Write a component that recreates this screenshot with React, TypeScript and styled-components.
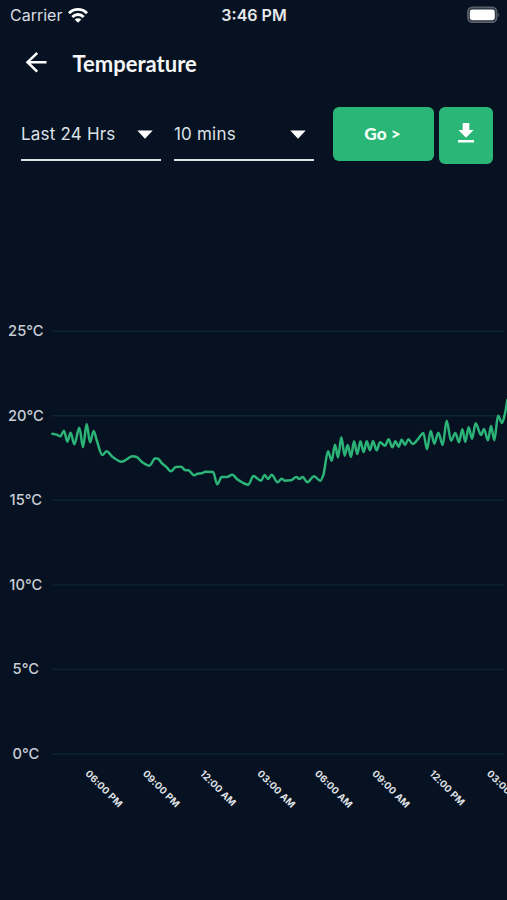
import React from "react";
import styled, { createGlobalStyle } from "styled-components";

const GlobalStyle = createGlobalStyle`
  * { box-sizing: border-box; }
  body { margin: 0; background: #061221; }
`;

const Screen = styled.main`
  width: 507px;
  height: 900px;
  overflow: hidden;
  display: flex;
  flex-direction: column;
  background: #061221;
  color: #f2f4f6;
  font-family: Inter, "Liberation Sans", sans-serif;
`;

const StatusBar = styled.div`
  height: 30px;
  padding: 0 6px 0 10px;
  display: grid;
  grid-template-columns: 1fr auto 1fr;
  align-items: center;
  font-size: 16px;
`;

const Carrier = styled.div`
  display: flex;
  align-items: center;
  gap: 6px;
  color: #d9dde2;
`;

const Clock = styled.div`
  margin-right: 3px;
  font-weight: 600;
  font-size: 16px;
  color: #e6e9ec;
`;

const BatterySlot = styled.div`
  display: flex;
  justify-content: flex-end;
`;

const Header = styled.header`
  height: 68px;
  padding: 0 0 0 24px;
  display: flex;
  align-items: center;
  gap: 24.5px;
`;

const Title = styled.h1`
  margin: 0;
  font: 700 22px/28px Lato, sans-serif;
  color: #f4f6f8;
`;

const Controls = styled.div`
  height: 70px;
  padding: 9px 13px 0 21px;
  display: flex;
  align-items: flex-start;
`;

const Select = styled.div`
  width: 140px;
  height: 54px;
  margin-right: 13px;
  padding: 2px 8px 0 0;
  display: flex;
  align-items: center;
  justify-content: space-between;
  border-bottom: 2px solid #dde0e3;
  font-size: 17px;
  letter-spacing: 0.2px;
  color: #dde1e7;
`;

const IconButton = styled.button<{ $width: number; $height: number }>`
  width: ${(p) => p.$width}px;
  height: ${(p) => p.$height}px;
  padding: 0 2px 0 0;
  border: 0;
  border-radius: 6px;
  display: flex;
  align-items: center;
  justify-content: center;
  background: #2ab676;
  color: #f4fff9;
  font: 900 17.2px/22px Lato, sans-serif;
`;

const DownloadButton = styled(IconButton)`
  padding: 0 0 5px;
`;

const Actions = styled.div`
  display: flex;
  align-items: flex-start;
  gap: 5px;
  margin-left: 6px;
`;

const Chart = styled.svg`
  display: block;
  flex: none;
`;

const AxisLabel = styled.text`
  fill: #c9ced6;
  font: 500 14.7px Inter, sans-serif;
`;

const TimeLabel = styled.text`
  fill: #e0e3e8;
  font: 700 9.6px Inter, sans-serif;
  letter-spacing: 0.15px;
`;

type Point = [number, number];

/* Readings in chart units, three units to a pixel, grouped by stretch of the day. */
const stretches: { from: number; points: Point[] }[] = [
  {
    from: 40,
    points: [[37,131],[50,134],[61,139],[72,122],[82,155],[92,128],[103,163],[118,113],[129,171],[140,102],[150,157],[161,123],[170,150],[187,195],[200,184],[218,201],[245,215],[278,199],[290,201],[305,215],[328,227],[346,205],[355,207],[365,219],[378,230],[393,244],[407,231]],
  },
  {
    from: 180,
    points: [[2,230],[8,233],[14,240],[25,241],[42,256],[53,251],[65,250],[76,245],[99,246],[112,283],[125,261],[140,261],[157,254],[172,268],[205,284],[220,258],[243,272],[254,255],[264,267],[275,254],[293,277],[305,266],[314,272],[333,271],[349,261],[358,267],[368,261],[382,277]],
  },
  {
    from: 310,
    points: [[12,259],[31,272],[40,255],[54,184],[65,212],[75,164],[84,202],[94,142],[104,197],[113,165],[123,201],[132,154],[142,192],[151,154],[161,186],[170,154],[180,181],[189,154],[200,181],[210,157],[225,167],[236,148],[247,172],[256,154],[266,170]],
  },
  {
    from: 400,
    points: [[5,149],[15,165],[25,148],[38,162],[55,146],[70,129],[81,178],[92,123],[103,161],[115,128],[128,165],[140,92],[153,152],[166,129],[177,157],[187,118],[196,156],[206,112],[216,146],[227,100],[243,135],[252,117],[264,151],[273,108],[283,151],[294,77],[306,99],[314,75],[322,30]],
  },
];

const CHART_TOP = 168;
const readings: Point[] = stretches.flatMap(({ from, points }) =>
  points.map(([x, y]): Point => [from + x / 3, 390 - CHART_TOP + y / 3])
);

/* Cubic path that never overshoots its readings. */
function monotonePath(p: Point[]): string {
  const slope = p.slice(1).map((q, i) => (q[1] - p[i][1]) / (q[0] - p[i][0]));
  const tangent = p.map((_, i) => {
    if (i === 0) return slope[0];
    if (i === p.length - 1) return slope[i - 1];
    const a = slope[i - 1];
    const b = slope[i];
    return a * b <= 0 ? 0 : (2 * a * b) / (a + b);
  });
  let d = `M${p[0][0]},${p[0][1]}`;
  for (let i = 1; i < p.length; i++) {
    const h = (p[i][0] - p[i - 1][0]) / 3;
    d += `C${p[i - 1][0] + h},${p[i - 1][1] + tangent[i - 1] * h} ${p[i][0] - h},${p[i][1] - tangent[i] * h} ${p[i][0]},${p[i][1]}`;
  }
  return d;
}

const degrees = [25, 20, 15, 10, 5, 0];
const times = ["06:00 PM", "09:00 PM", "12:00 AM", "03:00 AM", "06:00 AM", "09:00 AM", "12:00 PM", "03:00 PM"];

const Caret = () => (
  <svg width="16" height="9" viewBox="0 0 16 9">
    <path d="M0.3 0.5H15.7L8 8.7Z" fill="#fff" />
  </svg>
);

const Wifi = () => (
  <svg width="20" height="15" viewBox="0 0 20 15" fill="none" stroke="#fff" strokeWidth="2.8">
    <path d="M1 5.2C6 .2 14 .2 19 5.2" />
    <path d="M4.3 8.9C7.5 5.7 12.5 5.7 15.7 8.9" />
    <path d="M10 14.8L6.7 11.5C8.6 9.8 11.4 9.8 13.3 11.5Z" fill="#fff" stroke="none" />
  </svg>
);

const Battery = () => (
  <svg width="34" height="18" viewBox="0 0 34 18">
    <rect x="1" y="1.4" width="28.6" height="14.8" rx="4.5" fill="#202a38" stroke="#5a606a" strokeWidth="1.8" />
    <rect x="2.8" y="3.6" width="25" height="10.6" rx="2.4" fill="#fff" />
    <path d="M31.4 6.4Q33.2 8.8 31.4 11.2Z" fill="#727780" />
  </svg>
);

export default function App() {
  return (
    <Screen>
      <GlobalStyle />
      <StatusBar>
        <Carrier>
          Carrier
          <Wifi />
        </Carrier>
        <Clock>3:46 PM</Clock>
        <BatterySlot>
          <Battery />
        </BatterySlot>
      </StatusBar>
      <Header>
        <svg width="24" height="24" viewBox="0 0 24 24" fill="none" stroke="#fff" strokeWidth="2.5" strokeLinejoin="miter">
          <path d="M22.5 10.2H3.5M13.2 1L3.5 10.2L13.2 19.6" />
        </svg>
        <Title>Temperature</Title>
      </Header>
      <Controls>
        <Select>
          Last 24 Hrs
          <Caret />
        </Select>
        <Select>
          10 mins
          <Caret />
        </Select>
        <Actions>
          <IconButton $width={101} $height={54}>Go &gt;</IconButton>
          <DownloadButton $width={54} $height={57} aria-label="Download">
            <svg width="16" height="20" viewBox="0 0 16 20" fill="#fff">
              <path d="M4.7 0H11.3V7H15.6L8 14.7L.4 7H4.7ZM0 17H16V19.4H0Z" />
            </svg>
          </DownloadButton>
        </Actions>
      </Controls>
      <Chart width="507" height="732" viewBox="0 0 507 732">
        {degrees.map((value, i) => {
          const y = 163.2 + i * 84.55;
          return (
            <g key={value}>
              <AxisLabel x="25.8" y={y + 4.8} textAnchor="middle">{value}°C</AxisLabel>
              <line x1="52" x2="504" y1={y} y2={y} stroke="#0b2530" strokeWidth="1.4" />
            </g>
          );
        })}
        <path d={monotonePath(readings)} fill="none" stroke="#2bb378" strokeWidth="2.5" strokeLinecap="round" strokeLinejoin="round" />
        {times.map((time, i) => (
          <TimeLabel key={i} transform={`translate(${84.8 + i * 57.35} 606.3) rotate(45)`}>{time}</TimeLabel>
        ))}
      </Chart>
    </Screen>
  );
}
